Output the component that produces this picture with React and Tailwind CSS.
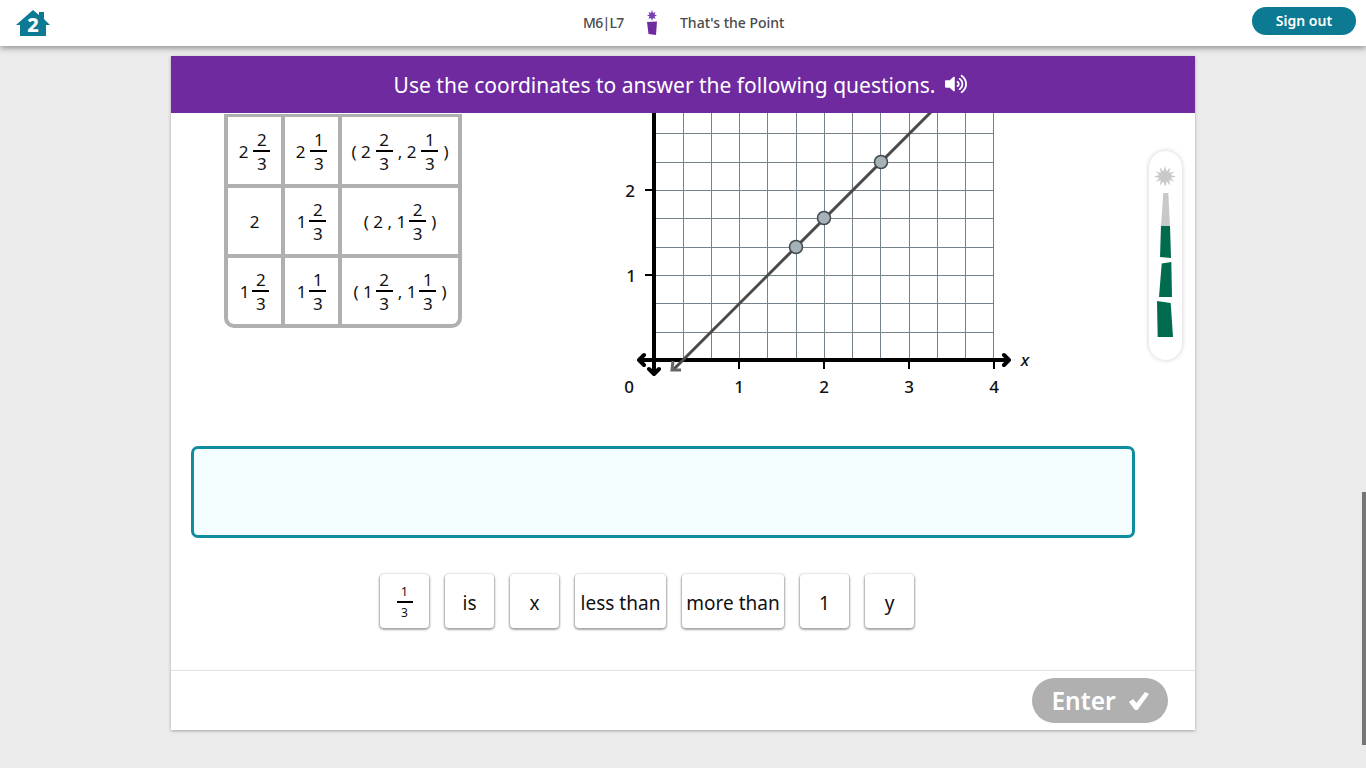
import { FaVolumeUp } from 'react-icons/fa';

const gridX = [683, 711, 739, 767, 796, 824, 852, 880, 909, 937, 965, 993];
const gridY = [133, 162, 190, 218, 247, 275, 303, 332];
const dots = [[796, 247], [824, 218], [881, 162]];

function Frac({ n, d, tight }) {
  return (
    <span className={`inline-flex flex-col items-center w-[17px] leading-none mt-[1px] ${tight ? '-ml-[2px]' : ''}`}>
      <span className="text-[17px] leading-[21px]">{n}</span>
      <span className="w-full h-[2px] bg-black"></span>
      <span className="text-[17px] leading-[24px]">{d}</span>
    </span>
  );
}

function Cell({ children, className = '' }) {
  return (
    <div className={`bg-white flex items-center justify-center gap-[5px] pt-[2px] text-[17px] text-[#111] ${className}`}>
      {children}
    </div>
  );
}

function Table() {
  return (
    <div className="mt-[1px] w-[238px] h-[214px] bg-[#b0b0b0] px-[4px] pt-[3px] pb-[4px] rounded-b-[10px] grid grid-cols-[53px_53px_116px] grid-rows-[67px_66px_66px] gap-[4px] shrink-0">
      <Cell>2 <Frac n="2" d="3" /></Cell>
      <Cell>2 <Frac n="1" d="3" /></Cell>
      <Cell>( 2 <Frac n="2" d="3" /> , 2 <Frac n="1" d="3" /> )</Cell>
      <Cell>2</Cell>
      <Cell>1 <Frac n="2" d="3" tight /></Cell>
      <Cell>( 2 , 1 <Frac n="2" d="3" tight /> )</Cell>
      <Cell className="rounded-bl-[6px]">1 <Frac n="2" d="3" tight /></Cell>
      <Cell>1 <Frac n="1" d="3" tight /></Cell>
      <Cell className="rounded-br-[6px]">( 1 <Frac n="2" d="3" tight /> , 1 <Frac n="1" d="3" tight /> )</Cell>
    </div>
  );
}

function Graph() {
  return (
    <svg viewBox="610 113 430 300" className="w-[430px] h-[300px] ml-[148px] shrink-0 block">
      {gridX.map((x) => <line key={x} x1={x + 0.5} y1="113" x2={x + 0.5} y2="360" stroke="#76828a" strokeWidth="1" />)}
      {gridY.map((y) => <line key={y} x1="654" y1={y + 0.5} x2="994" y2={y + 0.5} stroke="#76828a" strokeWidth="1" />)}
      <line x1="654" y1="113" x2="654" y2="371" stroke="#000" strokeWidth="4" />
      <line x1="642" y1="360" x2="1006" y2="360" stroke="#000" strokeWidth="4" />
      <path d="M644 355 L639 360 L644 365 M1004 355 L1009 360 L1004 365 M649 369 L654 374 L659 369" fill="none" stroke="#000" strokeWidth="4" strokeLinecap="round" strokeLinejoin="round" />
      {[739, 824, 909, 994].map((x) => <line key={x} x1={x} y1="360" x2={x} y2="369" stroke="#000" strokeWidth="2" />)}
      {[190, 275].map((y) => <line key={y} x1="645" y1={y} x2="654" y2={y} stroke="#000" strokeWidth="2" />)}
      <line x1="932" y1="111" x2="674" y2="369" stroke="#4a4a4a" strokeWidth="3" />
      <path d="M673 361 L672 370 L681 370" fill="none" stroke="#666" strokeWidth="3" />
      {dots.map(([x, y]) => <circle key={x} cx={x} cy={y} r="6.5" fill="#a7b1b8" stroke="#414a4f" strokeWidth="1.5" />)}
      <g fontFamily="'Noto Sans', sans-serif" fontSize="17" fontWeight="500" fill="#111" textAnchor="middle">
        <text x="630" y="197">2</text>
        <text x="631" y="282">1</text>
        <text x="629" y="393">0</text>
        <text x="739" y="393">1</text>
        <text x="824" y="393">2</text>
        <text x="909" y="393">3</text>
        <text x="994" y="393">4</text>
        <text x="1025" y="366" fontStyle="italic">x</text>
      </g>
    </svg>
  );
}

function Tile({ children, className = 'w-[49px]' }) {
  return (
    <div className={`h-[54px] rounded-[4px] bg-white flex items-center justify-center pt-[4px] text-[19px] text-[#111] shadow-[0_1px_2px_1px_rgba(0,0,0,0.35)] ${className}`}>
      {children}
    </div>
  );
}

function Thermometer() {
  return (
    <div className="absolute left-[978px] top-[95px] w-[33px] h-[209px] bg-white rounded-full shadow-[0_0_5px_rgba(0,0,0,0.2)]">
      <svg viewBox="1149 151 33 209" className="w-[33px] h-[209px] block">
        <path d="M1165 166l1.600 5.500 3.500-4-.9 5.400 5.300-1.600-3.900 3.800 5.400 1.400-5.400 1.400 3.900 3.800-5.300-1.600.9 5.400-3.500-4-1.600 5.500-1.600-5.500-3.500 4 .9-5.400-5.300 1.600 3.900-3.800-5.400-1.400 5.400-1.400-3.900-3.800 5.300 1.600-.9-5.400 3.500 4z" fill="#c8c8c8" />
        <path d="M1163.300 193h5l1.700 33h-9z" fill="#c8c8c8" />
        <path d="M1161 226h9l1 32-11-1z" fill="#006b4f" />
        <path d="M1161.700 263.500l9.600-1.500.7 35h-13z" fill="#006b4f" />
        <path d="M1157 301l13.700 2 2.300 34h-15.300z" fill="#006b4f" />
      </svg>
    </div>
  );
}

export default function App() {
  return (
    <div className="relative h-[768px] overflow-hidden bg-[#ebebeb] font-['Noto_Sans',sans-serif]">
      <header className="relative z-10 h-[46px] bg-white shadow-[0_2px_6px_rgba(0,0,0,0.4)] flex items-center justify-between pl-[16px] pr-[10px]">
        <svg viewBox="0 0 34 26" className="w-[34px] h-[26px] overflow-visible">
          <path d="M0 15 L17 0 L23 5 L23 2 L28 2 L28 9 L34 15 L30 15 L30 26 L4 26 L4 15 Z" fill="#0b7a92" />
          <text x="17" y="22" textAnchor="middle" fontFamily="'Noto Sans', sans-serif" fontWeight="800" fontSize="20" fill="#fff">2</text>
        </svg>
        <div className="absolute left-[583px] top-0 h-[44px] flex items-center text-[14px] font-medium text-[#4a4a4a]">
          <span className="w-[40px] whitespace-nowrap tracking-[-0.7px]">M6|L7</span>
          <svg viewBox="0 0 14 26" className="w-[14px] h-[26px] ml-[22px] mr-[21px] mt-[2px]">
            <path d="M7 0l1 3 2.500-1-1 2.500 2.500 1-2.500 1 1 2.500-2.500-1-1 3-1-3-2.500 1 1-2.500-2.500-1 2.500-1-1-2.500 2.500 1z" fill="#7a3fb0" />
            <path d="M2 12l10-.5-1 13.500-7.500-1z" fill="#6f2aa0" />
          </svg>
          <span>That's the Point</span>
        </div>
        <button className="w-[104px] h-[28px] -mt-[4px] pb-[2px] rounded-full bg-[#0b7a92] text-white text-[14px] font-semibold">Sign out</button>
      </header>

      <main className="relative w-[1024px] h-[674px] ml-[171px] mt-[10px] bg-white shadow-[0_1px_3px_rgba(0,0,0,0.3)] flex flex-col">
        <div className="h-[57px] bg-[#6f2aa0] flex items-center justify-center pr-[5px] text-white text-[21px] gap-[10px] shrink-0">
          <span className="mt-[2px]">Use the coordinates to answer the following questions.</span>
          <FaVolumeUp className="w-[22px] h-[22px] -mt-[2px]" />
        </div>

        <div className="h-[557px] shrink-0 overflow-hidden">
          <div className="flex items-start pl-[53px] h-[300px]">
            <Table />
            <Graph />
          </div>
          <div className="mt-[33px] ml-[20px] w-[944px] h-[92px] rounded-[7px] border-[3px] border-[#0f8ca0] bg-[#f3fcfe]"></div>
          <div className="mt-[36px] ml-[209px] flex gap-[16px]">
            <Tile>
              <span className="inline-flex flex-col items-center w-[16px] -mt-[3px]">
                <span className="text-[12px] leading-[19px]">1</span>
                <span className="w-full h-[2px] bg-black"></span>
                <span className="text-[12px] leading-[19px]">3</span>
              </span>
            </Tile>
            <Tile>is</Tile>
            <Tile>x</Tile>
            <Tile className="w-[91px]">less than</Tile>
            <Tile className="w-[102px]">more than</Tile>
            <Tile>1</Tile>
            <Tile>y</Tile>
          </div>
        </div>

        <div className="h-[60px] border-t border-[#e3e3e3] flex justify-end items-start pt-[7px] pr-[27px]">
          <button className="w-[136px] h-[45px] rounded-full bg-[#b0b0b0] text-white text-[24.5px] font-semibold flex items-center justify-center gap-[13px]">
            <span className="mt-[2px]">Enter</span>
            <svg viewBox="0 0 20 18" className="w-[20px] h-[18px]">
              <path d="M0 10 L4 7 L7.500 11 L16 0 L20 2 L8.500 18 L6 18 Z" fill="#fff" />
            </svg>
          </button>
        </div>

        <Thermometer />
      </main>

      <div className="absolute right-0 top-[492px] w-[4px] h-[253px] bg-[#757575]"></div>
    </div>
  );
}
